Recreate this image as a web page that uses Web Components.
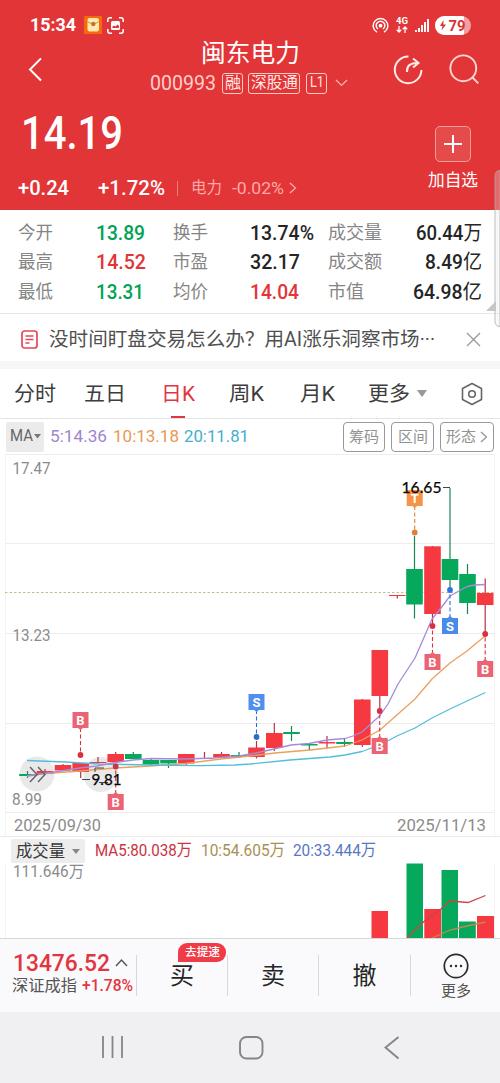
<!DOCTYPE html>
<html lang="zh-CN">
<head>
<meta charset="utf-8">
<title>闽东电力</title>
<style>
html,body{margin:0;padding:0}
body{width:500px;height:1083px;overflow:hidden;background:#fff;font-family:Roboto,"Noto Sans CJK SC",sans-serif}
</style>
</head>
<body>
<stock-app></stock-app>
<script>
const FONT = 'Roboto,"Noto Sans CJK SC",sans-serif';

/* A single-line label that fills the width given in "w". */
class FitText extends HTMLElement {
  connectedCallback() {
    if (this.shadowRoot) return;
    const a = (n, d) => this.getAttribute(n) || d;
    const root = this.attachShadow({ mode: 'open' });
    root.innerHTML = `<style>
      :host{display:block;flex:none;width:${a('w')}px;margin-left:${a('ml', 0)}px;height:1em;line-height:1;
        font-family:${FONT};font-size:${a('s', 16)}px;font-weight:${a('b', 400)};color:${a('c', 'inherit')};white-space:nowrap}
      span{display:inline-block;transform-origin:0 50%}
    </style><span><slot></slot></span>`;
    const span = root.querySelector('span');
    const natural = span.offsetWidth ? span.getBoundingClientRect().width : 0;
    if (natural) span.style.transform = `translateY(${a('dy', 0)}px) scaleX(${+a('w') / natural})`;
  }
}
customElements.define('fit-text', FitText);

function define(name, css, html) {
  const t = document.createElement('template');
  t.innerHTML = `<style>:host{display:block;flex:none;box-sizing:border-box}*{box-sizing:border-box}svg{display:block;flex:none}${css}</style>${html}`;
  customElements.define(name, class extends HTMLElement {
    constructor() {
      super();
      this.attachShadow({ mode: 'open' }).appendChild(t.content.cloneNode(true));
    }
  });
}

define('status-bar', `:host{height:40px;padding:10px 29px 0 30px;display:flex;align-items:center;color:#fff}
  .sp{flex:1}`, `
  <fit-text w="46" s="18.5" b="700">15:34</fit-text>
  <svg width="18" height="18" style="margin-left:8px"><rect width="18" height="18" rx="1" fill="#f56a0c"/><rect x="3.5" y="2" width="11.5" height="13.5" rx="2" fill="#ffe9b0"/><path d="M3.5 5.5Q9 10 15 5.500" fill="none" stroke="#e08a30"/><circle cx="9.300" cy="8" r="2.200" fill="#b8763a"/></svg>
  <svg width="17" height="17" style="margin-left:5px" fill="none" stroke="#fff" stroke-width="1.500"><path d="M.8 5V3Q.8.8 3 .8H5M12 .8H14Q16.200.8 16.200 3V5M16.200 12V14Q16.200 16.200 14 16.200H12M5 16.200H3Q.8 16.200.8 14V12"/><rect x="4" y="4" width="9" height="9" rx="1.500" fill="#fff" stroke="none"/><path d="M5.500 11V9.500L7 8.500 8.500 9.500 10.500 7.500 12 9V11Z" fill="#e23537" stroke="none"/></svg>
  <div class="sp"></div>
  <svg width="17" height="17" fill="none" stroke="#fff" stroke-width="1.500"><path d="M5 15.200A7.300 7.300 0 1 1 12 15.200M6 12A4.300 4.300 0 1 1 11 12"/><circle cx="8.500" cy="8.700" r="1.900" fill="#fff" stroke="none"/></svg>
  <div style="margin-left:7px;width:12px;flex:none"><fit-text w="12" s="8.500" b="700">4G</fit-text>
  <svg width="12" height="7" fill="none" stroke="#fff" stroke-width="1.300" style="margin-top:1px"><path d="M3 0V6M.8 3.800 3 6 5.200 3.800M9 7V1M6.800 3.200 9 1 11.200 3.200"/></svg></div>
  <svg width="14" height="14" style="margin-left:7px" stroke="#fff" stroke-width="1.900"><path d="M1 12V14M4 10V14M7 7V14M10 4V14M13 1V14"/></svg>
  <svg width="36" height="19" style="margin-left:6px"><defs><clipPath id="b"><rect width="36" height="19" rx="9.500"/></clipPath></defs><g clip-path="url(#b)"><rect width="36" height="19" fill="#f3a0a0"/><rect width="29" height="19" fill="#fff"/></g><path d="M8.500 4 5 10H7.500L6.500 14.500 11 8.500H8.300Z" fill="#d93336"/><text x="13.500" y="15" font-family="Roboto" font-weight="700" font-size="15.500" textLength="17" lengthAdjust="spacingAndGlyphs" fill="#d93336">79</text></svg>`);

define('title-bar', `:host{height:66px;display:flex;padding:0 21px 0 28px;color:#ffe9e5}
  .mid{margin-left:107px;width:213px;flex:none}
  .name{height:26px;padding-left:51px;display:flex;align-items:center;color:#fff}
  .code{height:34px;display:flex;align-items:center}
  .tag{height:21px;border:1px solid #ffc9c4;border-radius:3px;display:flex;align-items:center;justify-content:center;flex:none}`, `
  <svg width="15" height="25" style="margin-top:17px" fill="none" stroke="#fff" stroke-width="2"><path d="M13 1.500 2 13 13 24.500" transform="scale(1 .96)"/></svg>
  <div class="mid">
    <div class="name"><fit-text w="99" s="24.700" dy="1">闽东电力</fit-text></div>
    <div class="code"><fit-text w="66" s="20" c="#ffcfca">000993</fit-text>
      <div class="tag" style="width:21px;margin-left:6px"><fit-text w="16" s="15.500" dy="0.500">融</fit-text></div>
      <div class="tag" style="width:52px;margin-left:5px"><fit-text w="47" s="15.500" dy="0.500">深股通</fit-text></div>
      <div class="tag" style="width:21px;margin-left:6px"><fit-text w="14" s="15.500">L1</fit-text></div>
      <svg width="13" height="8" style="margin-left:8px" fill="none" stroke="#ffb5b0" stroke-width="1.200"><path d="M1 1 6.500 6.500 12 1"/></svg>
    </div></div>
  <svg width="30" height="30" style="margin:15px 0 0 30px" fill="none" stroke="#ffeae6" stroke-width="2"><path d="M15.500 1.600A13.300 13.300 0 1 0 28.400 15M14 17C13.500 11 17 7.700 25 7.900M20 3.500 25.500 8 20 12.500"/></svg>
  <svg width="31" height="31" style="margin:14px 0 0 26px" fill="none" stroke="#ffd5d0" stroke-width="1.900"><circle cx="14.300" cy="14.300" r="12.900"/><path d="M23.500 23.500 29.300 29.300"/></svg>`);

define('price-head', `:host{height:104px;display:flex;color:#fff}
  .l{width:428px;flex:none}.p{height:54px;padding-left:21px;display:flex;align-items:center}
  .c{height:56px;padding-left:18px;display:flex;align-items:center}
  .add{width:50px;display:flex;flex-direction:column;align-items:center;padding-top:20px}
  .box{width:36px;height:36px;border:1px solid #f29b98;border-radius:5px;background:#e64b4b;display:grid;place-items:center}`, `
  <div class="l"><div class="p"><fit-text w="102" s="45.500" b="500" dy="0.500">14.19</fit-text></div>
  <div class="c"><fit-text w="51" s="20" b="500">+0.24</fit-text><fit-text ml="29" w="67" s="20" b="500">+1.72%</fit-text>
  <div style="margin-left:12px;width:1px;height:15px;background:#f07d7b"></div>
  <fit-text ml="13" w="31" s="15.500" c="#ffaaa7" dy="1">电力</fit-text><fit-text ml="10" w="52" s="17" c="#ffaaa7">-0.02%</fit-text>
  <svg width="8" height="12" style="margin-left:5px" fill="none" stroke="#ffaaa7" stroke-width="1.300"><path d="M1 1 6.500 6 1 11"/></svg></div></div>
  <div class="add"><div class="box"><svg width="20" height="20" stroke="#fff" stroke-width="2"><path d="M10 1V19M1 10H19"/></svg></div><fit-text w="50" s="16.700" dy="1" style="margin-top:10px">加自选</fit-text></div>`);

/* The grid's rows come from data: label, its width, value, its width, colour. */
customElements.define('quote-stats', class extends HTMLElement {
  constructor() {
    super();
    const G = '#00a356', R = '#e23537', K = '#252525';
    const unit = v => v.replace(/[万亿]/, u => `<span style="font-weight:400">${u}</span>`);
    const rows = [
      [['今开', 35, '13.89', 49, G], ['换手', 35, '13.74%', 64, K], ['成交量', 54, '60.44万', 66, K]],
      [['最高', 35, '14.52', 50, R], ['市盈', 35, '32.17', 50, K], ['成交额', 54, '8.49亿', 57, K]],
      [['最低', 35, '13.31', 48, G], ['均价', 35, '14.04', 49, R], ['市值', 36, '64.98亿', 69, K]]];
    this.attachShadow({ mode: 'open' }).innerHTML = `<style>
      :host{display:block;box-sizing:border-box;flex:none;height:104px;padding:8px 18px 7px 18px;border-bottom:1px solid #e8e8e8}
      .r{height:29.500px;display:grid;grid-template-columns:78px 77px 77px 78px 70px 1fr;align-items:center}
      .r fit-text:last-child{justify-self:end}</style>` +
      rows.map(r => '<div class="r">' + r.map(([l, lw, v, vw, c]) =>
        `<fit-text w="${lw}" s="18" c="#858585">${l}</fit-text><fit-text w="${vw}" s="20" b="500" c="${c}">${unit(v)}</fit-text>`).join('') + '</div>').join('');
  }
});

define('notice-bar', `:host{height:55px;border-bottom:8px solid #f7f7f8;padding:3px 19px 0 21px;display:flex;align-items:center;color:#505050}`, `
  <svg width="17" height="19" fill="none" stroke="#e5455a" stroke-width="1.700"><rect x="1" y="1" width="15" height="17" rx="2.500"/><path d="M4.500 6H12.500M4.500 9.500H12.500M4.500 13H8.500"/></svg>
  <fit-text ml="11" w="386" s="19.300" dy="1">没时间盯盘交易怎么办？用AI涨乐洞察市场···</fit-text>
  <svg width="15" height="15" style="margin-left:auto" stroke="#999" stroke-width="1.300"><path d="M1 1 14 14M14 1 1 14"/></svg>`);

define('period-tabs', `:host{height:50px;border-bottom:1px solid #e4e4e4;padding:0 17px 0 14px;display:flex;align-items:center;color:#3d3d3d}
  .on{margin-left:35px;height:49px;width:34px;display:flex;flex-direction:column;align-items:center;justify-content:space-between;padding-top:14px;color:#e23542}
  .on i{width:14px;height:2px;background:#e23542}`, `
  <fit-text w="42" s="20.500" dy="1">分时</fit-text><fit-text ml="28" w="42" s="20.500" dy="1">五日</fit-text>
  <div class="on"><fit-text w="34" s="20.500" dy="1">日K</fit-text><i></i></div>
  <fit-text ml="34" w="35" s="20.500" dy="1">周K</fit-text><fit-text ml="36" w="35" s="20.500" dy="1">月K</fit-text><fit-text ml="33" w="42" s="20.500" dy="1">更多</fit-text>
  <svg width="10" height="7" style="margin-left:7px" fill="#999"><path d="M0 0H10L5.500 6.500H4.500Z"/></svg>
  <svg width="22" height="24" style="margin-left:auto" fill="none" stroke="#666" stroke-width="1.600"><path d="M11 1.500 20.500 6.500V17.500L11 22.500 1.500 17.500V6.500Z" stroke-linejoin="round"/><circle cx="11" cy="12" r="3.300"/></svg>`);

define('ma-row', `:host{height:35px;padding:2px 6px 2px;display:flex;align-items:center}
  .m{width:38px;height:30px;background:#ebebeb;border-radius:2px;display:flex;align-items:center;padding-left:4px;flex:none}
  .b{height:30px;border:1px solid #999;border-radius:4px;display:flex;align-items:center;justify-content:center;gap:4px;flex:none;color:#929292}`, `
  <div class="m"><fit-text w="23" s="16.500" c="#666">MA</fit-text><svg width="7" height="5" style="margin-left:1px" fill="#777"><path d="M0 0H7L3.500 4.500Z"/></svg></div>
  <fit-text ml="6" w="57" s="17" c="#a083d2">5:14.36</fit-text><fit-text ml="6" w="66" s="17" c="#e69a55">10:13.18</fit-text><fit-text ml="5" w="65" s="17" c="#45aed0">20:11.81</fit-text>
  <div class="b" style="width:42px;margin-left:auto"><fit-text w="30" s="15" dy="0.500">筹码</fit-text></div>
  <div class="b" style="width:43px;margin-left:6px"><fit-text w="30" s="15" dy="0.500">区间</fit-text></div>
  <div class="b" style="width:54px;margin-left:6px"><fit-text w="30" s="15" dy="0.500">形态</fit-text><svg width="8" height="12" fill="none" stroke="#929292" stroke-width="1.200"><path d="M1 1 6.500 6 1 11"/></svg></div>`);

customElements.define('candle-chart', class extends HTMLElement {
  constructor() {
    super();
    const R = '#f63941', G = '#06a95c';
    /* centre x, body top, body bottom, wick top, wick bottom, colour */
    const k = [[27.5,774,776,771,778,G],[45,771,774,769,774,R],[63,765,770.5,764,771,R],[80.700,763,772,763,778,R],[98,762,763,757,763,R],[115.700,754,762,752,763,R],
      [133.300,754,759,752,759,G],[151,760,764.500,758,765,G],[168.500,760,763.500,760,768,G],[186.300,754,763.500,754,765,R],[204.500,758,759,752,759,R],[221.500,754,757.500,752,758,R],
      [239,755,757,752,758,G],[256.500,747.500,757,741,758.500,R],[274.300,733,748,723,751,R],[291.500,732,734,726,741,G],[309.300,744,745.500,743,750,G],[327,742,743.500,736,748,R],
      [344.500,742,744,739,747,G],[362.300,699.500,745,699,747,R],[379.800,650,696,650,710,R],[397.300,595,596,595,598.500,R],[414.500,569,604.500,536,618.500,G],
      [432.500,546.300,614,546,624,R],[450,559,580,488,590,G],[467.500,574,603,564,614,G],[485.200,593,605,578.500,633,R]];
    const candles = k.map(([x, a, b, t, u, c]) => `<path d="M${x} ${t}V${u}" stroke="${c === G ? '#168556' : '#b92f4a'}" stroke-width="1.200"/><rect x="${x - 8.3}" y="${a}" width="16.600" height="${b - a}" fill="${c}"/>`).join('');
    /* letter, x, badge top, dot y, badge colour, dot colour */
    const m = [['B',80.500,712,755,'#ea6474','#d8303e'],['S',256.500,694,737,'#4f8ff0','#2b6cd0'],['B',115.700,794,766.500,'#ea6474','#c83545'],['B',379.700,738,711,'#ea6474','#d8304a'],
      ['T',414.700,490,532.500,'#f59348','#e08038'],['S',450,618,590,'#4a8ae8','#2f72e0'],['B',432.500,654,626,'#ea6474','#e22a42'],['B',485.200,661,634,'#ea6474','#d8303e']];
    const marks = m.map(([l, x, y, d, c, e]) => {
      const up = d > y;
      return `<path d="M${x} ${up ? y + 16 : y}V${d}" stroke="${e}" stroke-dasharray="4 2.500" stroke-width="1.100"/><circle cx="${x}" cy="${d}" r="2.900" fill="${e}"/><rect x="${x - 8}" y="${y}" width="16" height="16" fill="${c}"/><path d="M${x - 2.500} ${up ? y + 16 : y}L${x} ${up ? y + 18 : y - 2}L${x + 2.500} ${up ? y + 16 : y}Z" fill="${c}"/><text x="${x}" y="${y + 12.700}" text-anchor="middle" font-size="13" font-weight="700" fill="#fff">${l}</text>`;
    }).join('');
    const t = (x, y, w, s) => `<text x="${x}" y="${y}" textLength="${w}" lengthAdjust="spacingAndGlyphs">${s}</text>`;
    this.attachShadow({ mode: 'open' }).innerHTML = `<style>:host{display:block;flex:none;height:382px}svg{display:block}</style>
    <svg width="500" height="382" viewBox="0 454 500 382" font-family="Roboto" fill="none">
      <path d="M5 454.500H494.500M5 543.500H494.500M5 633.500H494.500M5 723.500H494.500M5 812.500H494.500" stroke="#ededee"/>
      <path d="M5.500 454V836M494.500 454V836" stroke="#f3f3f4"/>
      <g fill="#8b8b8b" font-size="16.500">${t(12.500,474,38,'17.47')}${t(12.500,640.500,38,'13.23')}${t(12,804.500,30,'8.99')}${t(14,830.500,87,'2025/09/30')}${t(397,830.500,89,'2025/11/13')}</g>
      <circle cx="37" cy="774" r="17.500" fill="#e9e9ea"/><circle cx="101" cy="774.500" r="17.500" fill="#e9e9ea"/>
      <path d="M5 592.500H494" stroke="#c9ba93" stroke-dasharray="2.500 2"/>
      ${candles}
      <g stroke-width="1.300" stroke-linejoin="round"><path d="M27 776L45 773.500 80 771 115 768 150 766 186 763.500 221 759 250 756 275 753 310 750 345 746 362 740 380 730 398 714 415 699 432 679 450 663 467 651 485 636" stroke="#e8a160"/>
      <path d="M27 760.500L65 762 100 764 150 765 200 765.700 235 765 250 764 290 760 330 757 345 755 362 751.500 380 745 397 736 415 728 432 718 450 709 467 701 485.500 692.500" stroke="#55bddc"/>
      <path d="M27 776L45 773.500 80 768 97 766 115 762.500 133 760 151 758.500 186 759 213 758 239 756 256 753 274 749 291 745 309 743.500 327 740 345 738.500 353 736 362 732 380 715.500 388 704 398 684 415 658 432 619 441 608 450 596 467 586.500 475 585 485.500 584.500" stroke="#a78bd6"/></g>
      ${marks}
      <path d="M30 767 37 774.500 30 782M38 767 45 774.500 38 782" stroke="#666" stroke-width="1.500"/>
      <path d="M95 772V768H104M99 782.500H108M82 779.500H90M443 487.500H450" stroke="#444" stroke-width="1"/>
      <g fill="#050505" stroke="#050505" stroke-width=".25" font-size="15.300" font-family="Lato">${t(91.500,784.500,30,'9.81')}${t(401.500,492.500,40,'16.65')}</g>
    </svg>`;
  }
});

define('volume-panel', `:host{height:102px;border-top:1px solid #e9e9ea}
  .h{height:26px;padding:2px 0 0 11px;display:flex;align-items:center}
  .m{width:74px;height:24px;background:#ededed;border-radius:2px;padding-left:5px;display:flex;align-items:center;color:#3a3a3a;flex:none}`, `
  <div class="h"><div class="m"><fit-text w="49" s="16.500" dy="0.500">成交量</fit-text><svg width="8" height="5" style="margin-left:7px" fill="#888"><path d="M0 0H8L4 5Z"/></svg></div>
  <fit-text ml="10" w="97" s="16.500" c="#c9343f">MA5:80.038万</fit-text><fit-text ml="9" w="84" s="16.500" c="#a89152">10:54.605万</fit-text><fit-text ml="8" w="83" s="16.500" c="#5876c5">20:33.444万</fit-text></div>
  <svg width="500" height="75" viewBox="0 863 500 75" fill="none"><path d="M5.500 863V938M494.500 863V938" stroke="#f3f3f4"/>
    <text x="13" y="876.500" font-family="Roboto,'Noto Sans CJK SC',sans-serif" font-size="16" fill="#8b8b8b" textLength="71" lengthAdjust="spacingAndGlyphs">111.646万</text>
    <path d="M371.500 911H388V938H371.500ZM424.300 909H441V938H424.300ZM477 916H494V938H477Z" fill="#f63941"/>
    <path d="M406.500 863.500H423V938H406.500ZM441.500 870H458V938H441.500ZM459 921.500H475.800V938H459Z" fill="#06a95c"/>
    <path d="M407 938 416 929 424 921.500 441 909 450 901 468 902.500 485.500 895.500" stroke="#cb4349" stroke-width="1.300"/>
    <path d="M432 938 450 930 467 926 485.500 922" stroke="#bd8a52" stroke-width="1.300"/></svg>`);

define('trade-bar', `:host{height:74px;background:#fafafc;border-top:1px solid #d5d8d8;display:flex;color:#262626}
  .i{width:136px;padding:13px 0 0 12px;flex:none}.r{display:flex;align-items:center;height:24px}
  .a{width:91px;height:41px;margin-top:16px;border-left:1px solid #d9d9dc;display:flex;align-items:center;justify-content:center;position:relative;flex:none}
  .pill{position:absolute;left:41px;top:-12px;width:48px;height:19px;border-radius:9px 9px 9px 0;background:#f03c46;color:#fff;display:grid;place-items:center}
  .more{flex-direction:column;gap:4px;width:90px}`, `
  <div class="i"><div class="r"><fit-text ml="1" w="97" s="23.500" b="500" c="#e23540">13476.52</fit-text><svg width="13" height="9" style="margin:-4px 0 0 5px" fill="none" stroke="#555" stroke-width="1.500"><path d="M1 8 6.500 2 12 8"/></svg></div>
  <div class="r" style="height:20px"><fit-text w="65" s="16" c="#555">深证成指</fit-text><fit-text ml="5" w="51" s="16.500" b="500" c="#e23540">+1.78%</fit-text></div></div>
  <div class="a"><fit-text w="24" s="24">买</fit-text><div class="pill"><fit-text w="35" s="11.700" b="500">去提速</fit-text></div></div>
  <div class="a"><fit-text w="24" s="24">卖</fit-text></div><div class="a" style="width:92px"><fit-text w="24" s="24">撤</fit-text></div>
  <div class="a more"><svg width="26" height="26"><circle cx="13" cy="13" r="11.700" fill="none" stroke="#2b2b2b" stroke-width="1.700"/><g fill="#2b2b2b"><circle cx="8" cy="13" r="1.200"/><circle cx="13" cy="13" r="1.200"/><circle cx="18" cy="13" r="1.200"/></g></svg><fit-text w="30" s="15" c="#555" dy="1">更多</fit-text></div>`);

define('nav-bar', `:host{height:71px;background:#f0f0f2;display:flex;padding:24px 0 0 101px}`, `
  <svg width="24" height="23" stroke="#858588" stroke-width="1.800"><path d="M2 0V22M11.500 0V22M21 0V22"/></svg>
  <svg width="25" height="24" style="margin-left:114px" fill="none" stroke="#858588" stroke-width="1.900"><rect x="1" y="1" width="22.500" height="21.500" rx="6.500"/></svg>
  <svg width="16" height="24" style="margin-left:120px" fill="none" stroke="#858588" stroke-width="1.900"><path d="M14.500 1 1.500 11.500 14.500 22.500"/></svg>`);

/* Handle of the side drawer, which lies over the page's right edge. */
define('edge-handle', `:host{position:absolute;left:486px;top:170px;width:14px;height:157px;overflow:hidden}`, `
  <svg width="14" height="157"><path d="M14 .5Q9 .5 9 6V151Q9 156.500 14 156.500Z" fill="#e7e7e7" fill-opacity=".3" stroke="#aaa" stroke-opacity=".75"/><path d="M0 141 10 131V141Z" fill="#c6c6c6"/></svg>`);

define('stock-app', `:host{width:500px;height:1083px;position:relative;overflow:hidden;display:flex;flex-direction:column;background:#fff}
  .red{background:#e23537;height:210px;flex:none}`, `
  <div class="red"><status-bar></status-bar><title-bar></title-bar><price-head></price-head></div>
  <quote-stats></quote-stats><notice-bar></notice-bar><period-tabs></period-tabs><ma-row></ma-row>
  <candle-chart></candle-chart><volume-panel></volume-panel><trade-bar></trade-bar><nav-bar></nav-bar><edge-handle></edge-handle>`);
</script>
</body>
</html>
